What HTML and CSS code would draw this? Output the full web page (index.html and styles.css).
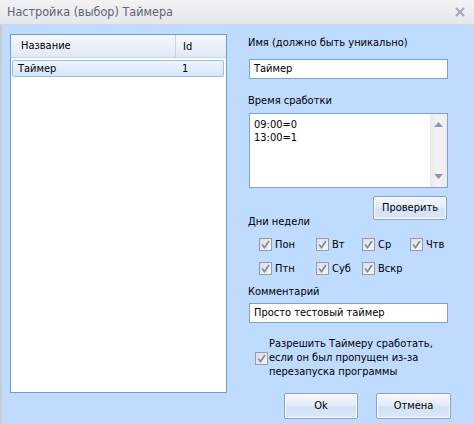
FILE: index.html
```html
<!DOCTYPE html>
<html>
<head>
<meta charset="utf-8">
<link rel="stylesheet" href="styles.css">
</head>
<body>
<div class="window">
  <div class="titlebar">
    <span class="title">Настройка (выбор) Таймера</span>
    <svg class="close" width="10" height="10" viewBox="0 0 10 10"><path d="M1 1 L9 9 M9 1 L1 9" stroke="#a3abb8" stroke-width="2.2"/></svg>
  </div>
  <div class="content">
    <div class="listbox">
      <div class="lb-header">
        <div class="col-name">Название</div>
        <div class="col-id">Id</div>
      </div>
      <div class="lb-row">
        <div class="col-name">Таймер</div>
        <div class="col-id">1</div>
      </div>
    </div>
    <div class="panel">
      <div class="label l-name">Имя (должно быть уникально)</div>
      <div class="input">Таймер</div>
      <div class="label l-time">Время сработки</div>
      <div class="memo">
        <div class="memo-text">09:00=0<br>13:00=1</div>
        <div class="scroll">
          <svg width="9" height="5" viewBox="0 0 9 5"><path d="M4.5 0 L9 5 L0 5 Z" fill="#8a98b4"/></svg>
          <svg width="9" height="5" viewBox="0 0 9 5"><path d="M0 0 L9 0 L4.5 5 Z" fill="#8a98b4"/></svg>
        </div>
      </div>
      <div class="check-row">
        <div class="label">Дни недели</div>
        <div class="btn btn-check">Проверить</div>
      </div>
      <div class="days">
        <div class="cb"><span class="box"><svg width="9" height="9" viewBox="0 0 9 9"><path d="M1 4.5 L3.5 7.5 L8 1" fill="none" stroke="#7a8ca8" stroke-width="1.7"/></svg></span>Пон</div>
        <div class="cb"><span class="box"><svg width="9" height="9" viewBox="0 0 9 9"><path d="M1 4.5 L3.5 7.5 L8 1" fill="none" stroke="#7a8ca8" stroke-width="1.7"/></svg></span>Вт</div>
        <div class="cb"><span class="box"><svg width="9" height="9" viewBox="0 0 9 9"><path d="M1 4.5 L3.5 7.5 L8 1" fill="none" stroke="#7a8ca8" stroke-width="1.7"/></svg></span>Ср</div>
        <div class="cb"><span class="box"><svg width="9" height="9" viewBox="0 0 9 9"><path d="M1 4.5 L3.5 7.5 L8 1" fill="none" stroke="#7a8ca8" stroke-width="1.7"/></svg></span>Чтв</div>
        <div class="cb"><span class="box"><svg width="9" height="9" viewBox="0 0 9 9"><path d="M1 4.5 L3.5 7.5 L8 1" fill="none" stroke="#7a8ca8" stroke-width="1.7"/></svg></span>Птн</div>
        <div class="cb"><span class="box"><svg width="9" height="9" viewBox="0 0 9 9"><path d="M1 4.5 L3.5 7.5 L8 1" fill="none" stroke="#7a8ca8" stroke-width="1.7"/></svg></span>Суб</div>
        <div class="cb"><span class="box"><svg width="9" height="9" viewBox="0 0 9 9"><path d="M1 4.5 L3.5 7.5 L8 1" fill="none" stroke="#7a8ca8" stroke-width="1.7"/></svg></span>Вскр</div>
      </div>
      <div class="label l-comment">Комментарий</div>
      <div class="input">Просто тестовый таймер</div>
      <div class="allow">
        <span class="box"><svg width="9" height="9" viewBox="0 0 9 9"><path d="M1 4.5 L3.5 7.5 L8 1" fill="none" stroke="#7a8ca8" stroke-width="1.7"/></svg></span>
        <div class="allow-text">Разрешить Таймеру сработать,<br>если он был пропущен из-за<br>перезапуска программы</div>
      </div>
      <div class="buttons">
        <div class="btn btn-ok">Ok</div>
        <div class="btn btn-cancel">Отмена</div>
      </div>
    </div>
  </div>
</div>
</body>
</html>
```
FILE: styles.css
```css
html, body {
  margin: 0;
  padding: 0;
}
body {
  width: 474px;
  height: 424px;
  overflow: hidden;
  font-family: "DejaVu Sans Condensed", "DejaVu Sans", sans-serif;
  font-size: 11px;
  color: #000;
}
.window {
  width: 474px;
  height: 424px;
  display: flex;
  flex-direction: column;
  background: #bfdbff;
}
.titlebar {
  height: 24px;
  flex: none;
  display: flex;
  align-items: center;
  justify-content: space-between;
  padding: 0 9px 0 7px;
  background: linear-gradient(#f1f3f6, #e4e7eb);
  border-bottom: 1px solid #d3d8df;
}
.title {
  font-size: 12.5px;
  color: #5f6470;
  margin-top: -1px;
}
.content {
  flex: 1;
  display: flex;
  border-left: 2px solid #c9ccd1;
  padding-left: 8px;
}
.listbox {
  margin-top: 9px;
  width: 215px;
  height: 357px;
  border: 1px solid #6f9bd6;
  background: #fff;
}
.lb-header {
  display: flex;
  height: 22px;
  align-items: center;
  background: linear-gradient(#f6f9fd, #dfe9f6);
  border-bottom: 1px solid #c3d3ea;
}
.lb-header .col-name {
  padding-left: 10px;
  height: 22px;
  line-height: 22px;
  border-right: 1px solid #c3d3ea;
  box-sizing: border-box;
  width: 165px;
}
.lb-header .col-id {
  padding-left: 7px;
}
.lb-row {
  display: flex;
  align-items: center;
  margin: 2px 2px 0 1px;
  height: 15px;
  border: 1px solid #9fbfe6;
  border-radius: 2px;
  background: linear-gradient(#eef5fe, #d5e6fb);
}
.lb-row .col-name {
  width: 163px;
  padding-left: 5px;
  box-sizing: border-box;
}
.lb-row .col-id {
  padding-left: 6px;
}
.panel {
  margin-left: 21px;
  width: 204px;
  display: flex;
  flex-direction: column;
}
.label {
  height: 14px;
  line-height: 14px;
}
.l-name {
  margin-top: 11px;
}
.input {
  margin-top: 9px;
  margin-left: 1px;
  width: 199px;
  height: 20px;
  box-sizing: border-box;
  border: 1px solid #7aa2d6;
  background: #fff;
  line-height: 18px;
  padding-left: 4px;
}
.l-time {
  margin-top: 15px;
}
.memo {
  margin-top: 5px;
  margin-left: 1px;
  width: 199px;
  height: 75px;
  box-sizing: border-box;
  border: 1px solid #7aa2d6;
  background: #fff;
  display: flex;
}
.memo-text {
  flex: 1;
  padding: 4px 0 0 4px;
  line-height: 13px;
}
.scroll {
  width: 17px;
  background: linear-gradient(90deg, #e9e9e9, #f3f3f3 40%, #ececec);
  display: flex;
  flex-direction: column;
  justify-content: space-between;
  align-items: center;
  padding: 8px 0 8px;
}
.check-row {
  margin-top: 8px;
  height: 33px;
  display: flex;
  justify-content: space-between;
}
.check-row .label {
  align-self: flex-end;
}
.btn {
  box-sizing: border-box;
  height: 24px;
  line-height: 22px;
  text-align: center;
  border: 1px solid #8da3c1;
  border-radius: 2px;
  background: linear-gradient(#f4f8fd 0%, #e3edf9 45%, #d2e2f5 55%, #dbe7f7 100%);
  box-shadow: inset 0 0 0 1px #fbfdff;
}
.btn-check {
  width: 74px;
  margin-right: 5px;
}
.days {
  margin-top: 9px;
  padding-left: 11px;
  display: grid;
  grid-template-columns: 57px 46px 48px auto;
  row-gap: 11px;
}
.cb {
  display: flex;
  align-items: center;
  height: 13px;
}
.box {
  width: 11px;
  height: 11px;
  border: 1px solid #979ca3;
  background: linear-gradient(135deg, #dcdfe3, #f5f6f7);
  display: inline-flex;
  align-items: center;
  justify-content: center;
  margin-right: 3px;
  flex: none;
}
.l-comment {
  margin-top: 10px;
}
.l-comment + .input {
  margin-top: 4px;
  height: 20px;
}
.allow {
  margin-top: 14px;
  display: flex;
  align-items: center;
  padding-left: 7px;
}
.allow .box {
  margin-right: 1px;
  margin-top: 1px;
}
.allow-text {
  line-height: 14px;
}
.buttons {
  margin-top: 14px;
  display: flex;
  padding-left: 36px;
  gap: 18px;
}
.btn-ok {
  width: 74px;
  height: 26px;
  line-height: 24px;
}
.btn-cancel {
  width: 75px;
  height: 26px;
  line-height: 24px;
}
```
